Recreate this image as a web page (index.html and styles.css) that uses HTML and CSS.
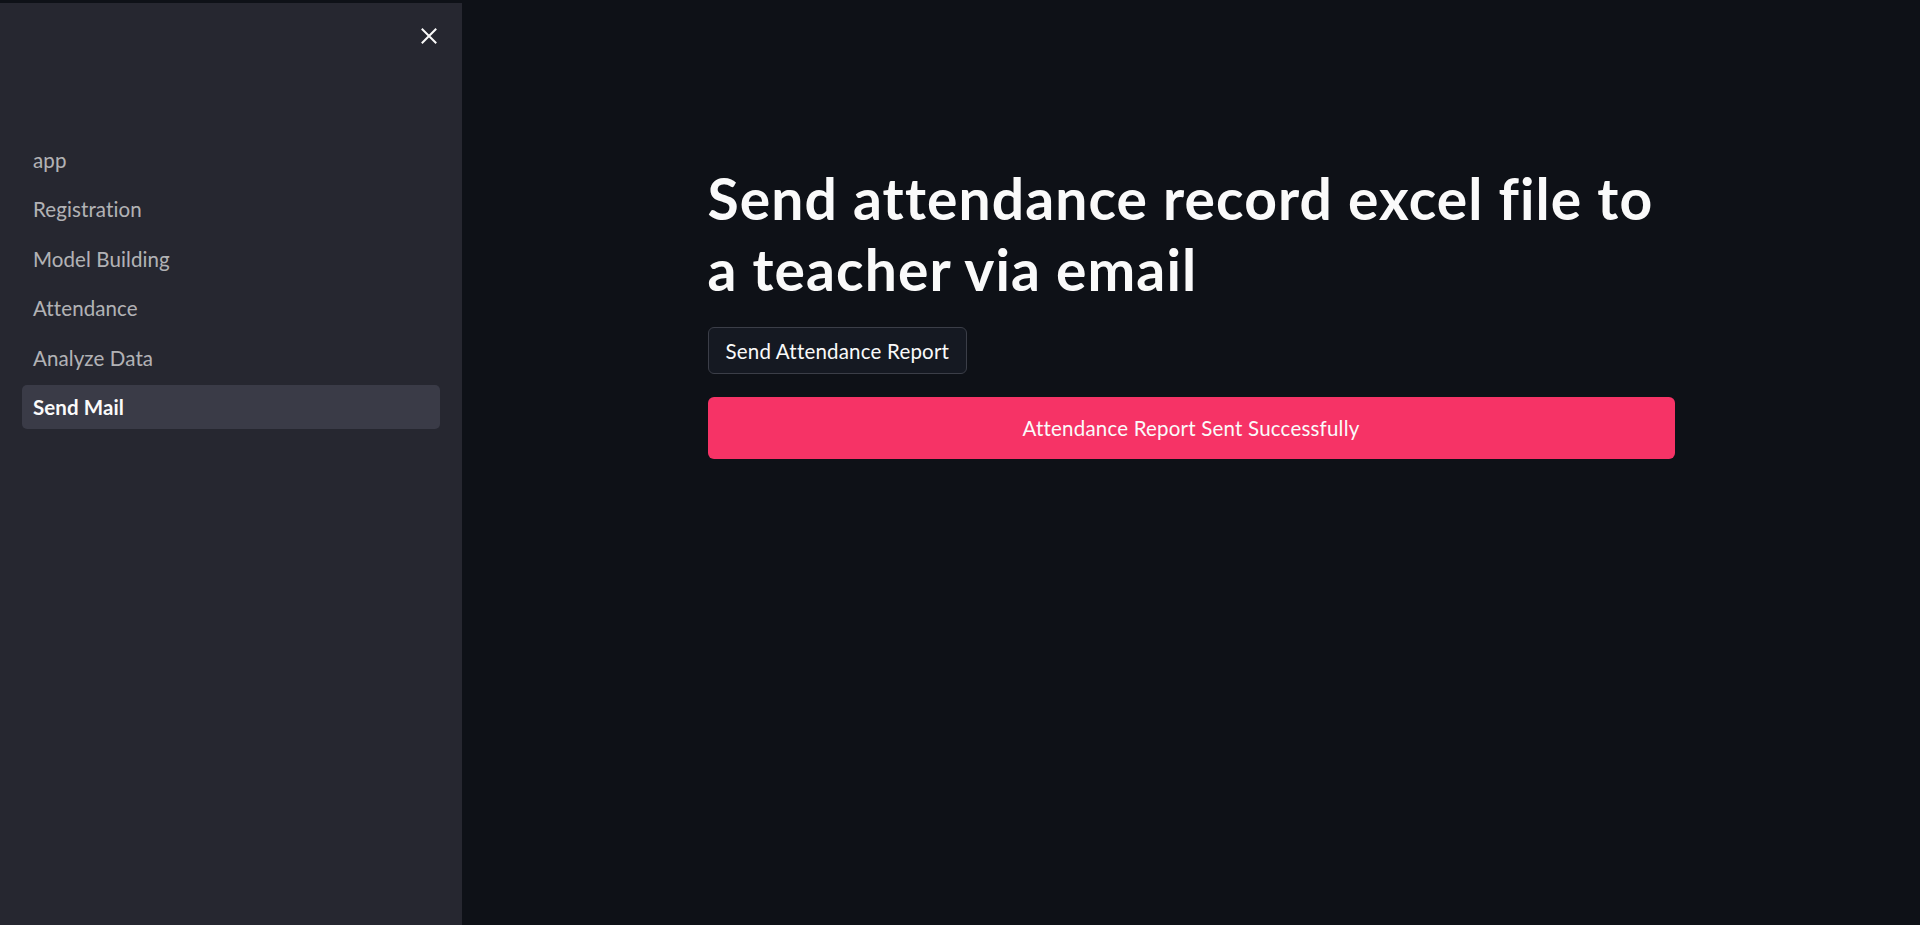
FILE: index.html
```html
<!DOCTYPE html>
<html lang="en">
<head>
<meta charset="utf-8">
<title>Send Mail</title>
<link rel="stylesheet" href="styles.css">
</head>
<body>
<div class="app">
  <aside class="sidebar">
    <div class="sidebar-head">
      <button class="close-btn" aria-label="Close sidebar">
        <svg width="16" height="16" viewBox="0 0 16 16"><path d="M1.5 1.5 L14.5 14.5 M14.5 1.5 L1.5 14.5" stroke="#fafafa" stroke-width="2" stroke-linecap="square" fill="none"/></svg>
      </button>
    </div>
    <nav class="nav">
      <a class="nav-item">app</a>
      <a class="nav-item">Registration</a>
      <a class="nav-item">Model Building</a>
      <a class="nav-item">Attendance</a>
      <a class="nav-item">Analyze Data</a>
      <a class="nav-item active">Send Mail</a>
    </nav>
  </aside>
  <main class="main">
    <div class="block">
      <h1 class="title">Send attendance record excel file to a teacher via email</h1>
      <button class="btn">Send Attendance Report</button>
      <div class="alert">Attendance Report Sent Successfully</div>
    </div>
  </main>
</div>
</body>
</html>
```
FILE: styles.css
```css
html, body {
  margin: 0;
  padding: 0;
  height: 100%;
  background: #0e1117;
  font-family: "Source Sans Pro", Lato, "Noto Sans", sans-serif;
  color: #fafafa;
}
.app {
  display: flex;
  height: 925px;
  padding-top: 3px;
  box-sizing: border-box;
}
.sidebar {
  width: 462px;
  flex: none;
  background: #262730;
  display: flex;
  flex-direction: column;
}
.sidebar-head {
  display: flex;
  justify-content: flex-end;
  padding: 25px 25px 0 0;
  height: 134.5px;
  box-sizing: border-box;
}
.close-btn {
  background: none;
  border: 0;
  padding: 0;
  width: 16px;
  height: 16px;
  cursor: pointer;
  display: block;
}
.close-btn svg { display: block; }
.nav {
  display: flex;
  flex-direction: column;
  gap: 5.5px;
  padding: 0 22px;
}
.nav-item {
  height: 44px;
  display: flex;
  align-items: center;
  padding-left: 11px;
  border-radius: 5px;
  font-size: 20.5px;
  letter-spacing: 0.1px;
  color: rgba(250, 250, 250, 0.68);
}
.nav-item.active {
  background: #3a3b47;
  color: #fafafa;
  font-weight: 700;
}
.main {
  flex: 1;
  display: flex;
  justify-content: center;
}
.block {
  width: 967px;
  padding-top: 159.5px;
  display: flex;
  flex-direction: column;
  align-items: flex-start;
}
.title {
  margin: 0;
  font-size: 57px;
  line-height: 71px;
  font-weight: 700;
  letter-spacing: 1.1px;
}
.btn {
  margin-top: 22.5px;
  height: 47px;
  padding: 0 17px;
  background: #151922;
  border: 1px solid #3b3e48;
  border-radius: 6px;
  color: #fafafa;
  font-family: inherit;
  font-size: 20.5px;
  letter-spacing: 0.2px;
}
.alert {
  margin-top: 23px;
  align-self: stretch;
  height: 62px;
  background: #f63366;
  border-radius: 6px;
  display: flex;
  align-items: center;
  justify-content: center;
  font-size: 20.5px;
  letter-spacing: 0.2px;
  color: #fafafa;
}
```
